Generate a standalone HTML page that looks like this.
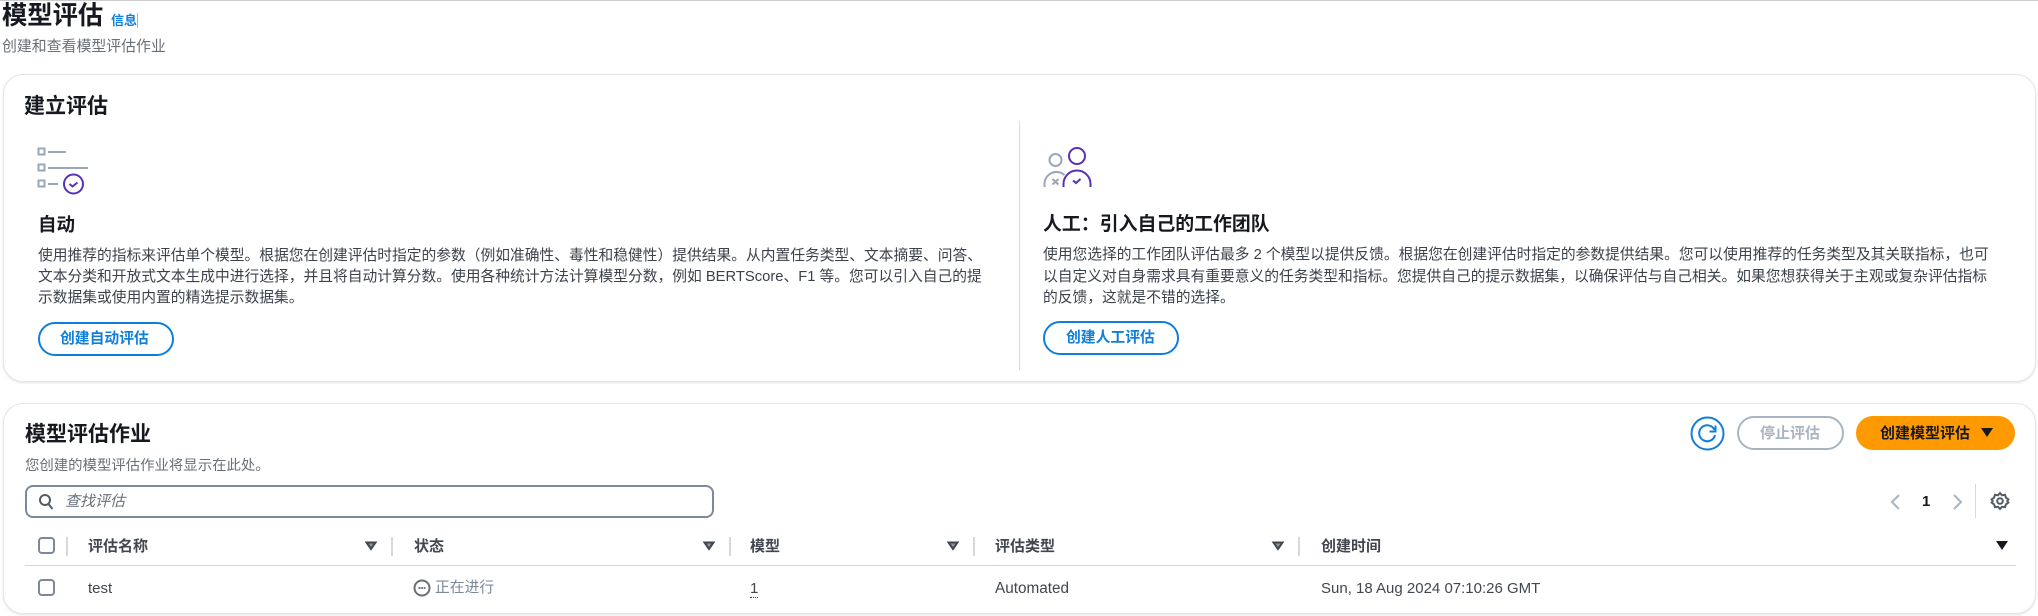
<!DOCTYPE html>
<html lang="zh"><head><meta charset="utf-8"><style>
html,body{margin:0;padding:0;background:#fff;width:2038px;height:616px;overflow:hidden}
body{font-family:"Liberation Sans","Noto Sans CJK SC",sans-serif;color:#16191f;position:relative}
#w{position:absolute;left:0;top:0;width:2038px;height:616px;filter:blur(.3px)}
.t{position:absolute;white-space:nowrap;line-height:1}
.b{font-weight:700}
.card{position:absolute;box-sizing:border-box;background:#fff;border:1px solid #e3e6ea;border-radius:20px;box-shadow:0 1px 2px rgba(0,28,36,.12)}
.btn{position:absolute;box-sizing:border-box;height:34px;border-radius:17px;border:2px solid #0f7fdb;background:#fff}
.sep{position:absolute;width:2px;background:#d5dbdb}
.p{color:#3c424b;font-size:14.75px}
.th{color:#414750;font-size:15px;font-weight:700}
.cb{position:absolute;box-sizing:border-box;width:17px;height:17px;border:2px solid #7d8998;border-radius:4px;background:#fff}
svg{position:absolute;overflow:visible}
</style></head><body><div id="w">
<div style="position:absolute;left:0;top:0;width:2038px;height:1px;background:#ccc"></div>

<div class="t b" style="left:2px;top:4px;font-size:25.3px">模型评估</div>
<div class="t b" style="left:111px;top:14px;font-size:13px;color:#0f7fdb">信息</div>
<div style="position:absolute;left:137px;top:13px;width:1px;height:15px;background:#7db8ea"></div>
<div class="t" style="left:2px;top:40px;font-size:14.9px;color:#687078">创建和查看模型评估作业</div>

<div class="card" style="left:3px;top:74px;width:2033px;height:308px"></div>
<div class="t b" style="left:24px;top:96px;font-size:21px">建立评估</div>
<div style="position:absolute;left:1019px;top:121px;width:1px;height:249px;background:#d5dbdb"></div>

<svg style="left:0;top:0" width="120" height="200" fill="none">
<g stroke="#9ba7b6" stroke-width="2"><rect x="38.5" y="148.5" width="6" height="6"/><rect x="38.5" y="164.5" width="6" height="6"/><rect x="38.5" y="180.5" width="6" height="6"/>
<path d="M48 152h18M48 168h40M48 184h10"/></g>
<circle cx="73.500" cy="184" r="9.500" stroke="#5a30b5" stroke-width="2"/>
<path d="M69.500 184l3 2.500 5-4" stroke="#5a30b5" stroke-width="2"/>
</svg>
<div class="t b" style="left:38px;top:215.500px;font-size:18.500px">自动</div>
<div class="t p" style="left:38px;top:249px">使用推荐的指标来评估单个模型。根据您在创建评估时指定的参数（例如准确性、毒性和稳健性）提供结果。从内置任务类型、文本摘要、问答、</div>
<div class="t p" style="left:38px;top:270px">文本分类和开放式文本生成中进行选择，并且将自动计算分数。使用各种统计方法计算模型分数，例如 BERTScore、F1 等。您可以引入自己的提</div>
<div class="t p" style="left:38px;top:291px">示数据集或使用内置的精选提示数据集。</div>
<div class="btn" style="left:38px;top:322px;width:136px"></div>
<div class="t b" style="left:60px;top:332px;font-size:14.800px;color:#0f7fdb">创建自动评估</div>

<svg style="left:1040px;top:130px" width="60" height="60" fill="none">
<circle cx="15.500" cy="30" r="6" stroke="#9ba7b6" stroke-width="2"/>
<path d="M4.500 57v-3a12 12 0 0 1 20-9" stroke="#9ba7b6" stroke-width="2"/>
<path d="M12.500 49l6 5.500M18.500 49l-6 5.500" stroke="#9ba7b6" stroke-width="2"/>
<circle cx="37" cy="26" r="8" stroke="#5a30b5" stroke-width="2"/>
<path d="M23.500 57v-3a13.500 13.500 0 0 1 27 0v3" stroke="#5a30b5" stroke-width="2"/>
<path d="M33 50.500l3 2.500 4.500-4" stroke="#5a30b5" stroke-width="2"/>
</svg>
<div class="t b" style="left:1043px;top:215.500px;font-size:18.900px">人工：引入自己的工作团队</div>
<div class="t p" style="left:1043px;top:248px">使用您选择的工作团队评估最多 2 个模型以提供反馈。根据您在创建评估时指定的参数提供结果。您可以使用推荐的任务类型及其关联指标，也可</div>
<div class="t p" style="left:1043px;top:270px">以自定义对自身需求具有重要意义的任务类型和指标。您提供自己的提示数据集，以确保评估与自己相关。如果您想获得关于主观或复杂评估指标</div>
<div class="t p" style="left:1043px;top:291px">的反馈，这就是不错的选择。</div>
<div class="btn" style="left:1043px;top:321px;width:136px"></div>
<div class="t b" style="left:1066px;top:331px;font-size:14.800px;color:#0f7fdb">创建人工评估</div>

<div class="card" style="left:3px;top:403px;width:2033px;height:211px"></div>
<div class="t b" style="left:25px;top:424px;font-size:21px">模型评估作业</div>
<div class="t" style="left:25px;top:459px;font-size:14.400px;color:#687078">您创建的模型评估作业将显示在此处。</div>

<svg style="left:1690px;top:416px" width="36" height="35" fill="none" stroke="#0f7fdb" stroke-width="2">
<circle cx="17.500" cy="17.500" r="16"/>
<path d="M24.500 14a8 8 0 1 0 .5 5"/><path d="M25.500 9.500v6h-6" stroke-width="2"/>
</svg>
<div class="btn" style="left:1737px;top:416px;width:107px;border-color:#a9b4c1"></div>
<div class="t b" style="left:1760px;top:426px;font-size:15px;color:#a9b4c1">停止评估</div>
<div class="btn" style="left:1856px;top:416px;width:159px;background:#f90;border-color:#f90"></div>
<div class="t b" style="left:1880px;top:426px;font-size:15px;color:#16191f">创建模型评估</div>
<svg style="left:1981px;top:428px" width="12" height="10"><path d="M0 0h12L6 9z" fill="#16191f"/></svg>

<div style="position:absolute;box-sizing:border-box;left:25px;top:485px;width:689px;height:33px;border:2px solid #7d8998;border-radius:8px;background:#fff"></div>
<svg style="left:39px;top:494px" width="14" height="15" fill="none" stroke="#545b64" stroke-width="2"><circle cx="6" cy="6" r="5"/><path d="M9.500 10l4 5"/></svg>
<div class="t" style="left:65px;top:494px;font-size:15px;font-style:italic;color:#687078">查找评估</div>

<svg style="left:1890px;top:493px" width="80" height="18" fill="none" stroke="#a9b4c1" stroke-width="2"><path d="M9 2L2 9l7 7"/><path d="M64 2l7 7-7 7"/></svg>
<div class="t b" style="left:1922px;top:494px;font-size:15px;color:#16191f">1</div>
<div class="sep" style="left:1975px;top:484px;height:34px;width:1px"></div>
<svg style="left:1991px;top:492px" width="18" height="18" fill="none" stroke="#545b64" stroke-width="2"><circle cx="9" cy="9" r="2.800"/><path d="M9 1l2 2.300 3-.5 1 2.900 2.400 1.800L16.300 9l1.100 1.500-2.400 1.800-1 2.900-3-.5L9 17l-2-2.300-3 .5-1-2.900L.6 10.500 1.700 9 .6 7.500 3 5.700l1-2.900 3 .5z"/></svg>

<div class="cb" style="left:38px;top:537px"></div>
<div class="sep" style="left:66px;top:537px;height:19px"></div>
<div class="t th" style="left:88px;top:539px">评估名称</div>
<svg style="left:365px;top:541px" width="12" height="10" fill="none" stroke="#414750" stroke-width="2"><path d="M1.500 1.500h9L6 8z" fill="#8a929c"/></svg>
<div class="sep" style="left:391px;top:537px;height:19px"></div>
<div class="t th" style="left:414px;top:539px">状态</div>
<svg style="left:703px;top:541px" width="12" height="10" fill="none" stroke="#414750" stroke-width="2"><path d="M1.500 1.500h9L6 8z" fill="#8a929c"/></svg>
<div class="sep" style="left:729px;top:537px;height:19px"></div>
<div class="t th" style="left:750px;top:539px">模型</div>
<svg style="left:947px;top:541px" width="12" height="10" fill="none" stroke="#414750" stroke-width="2"><path d="M1.500 1.500h9L6 8z" fill="#8a929c"/></svg>
<div class="sep" style="left:973px;top:537px;height:19px"></div>
<div class="t th" style="left:995px;top:539px">评估类型</div>
<svg style="left:1272px;top:541px" width="12" height="10" fill="none" stroke="#414750" stroke-width="2"><path d="M1.500 1.500h9L6 8z" fill="#8a929c"/></svg>
<div class="sep" style="left:1298px;top:537px;height:19px"></div>
<div class="t th" style="left:1321px;top:539px">创建时间</div>
<svg style="left:1996px;top:541px" width="12" height="10"><path d="M0 0h12L6 9z" fill="#16191f"/></svg>
<div style="position:absolute;left:25px;top:565px;width:1991px;height:1px;background:#d0d5dd"></div>

<div class="cb" style="left:38px;top:579px"></div>
<div class="t" style="left:88px;top:580.500px;font-size:15px;color:#414750">test</div>
<svg style="left:413px;top:579px" width="18" height="18" fill="none"><circle cx="9" cy="9" r="7.500" stroke="#687078" stroke-width="2"/><path d="M5.500 9h7" stroke="#687078" stroke-width="2" stroke-dasharray="2 .8"/></svg>
<div class="t" style="left:435px;top:581px;font-size:14.800px;color:#7d8998">正在进行</div>
<div class="t" style="left:750px;top:580.500px;font-size:15px;color:#414750;border-bottom:1px dotted #414750;padding-bottom:1px">1</div>
<div class="t" style="left:995px;top:580.500px;font-size:15.300px;color:#414750">Automated</div>
<div class="t" style="left:1321px;top:580.500px;font-size:15px;color:#414750">Sun, 18 Aug 2024 07:10:26 GMT</div>
</div></body></html>
